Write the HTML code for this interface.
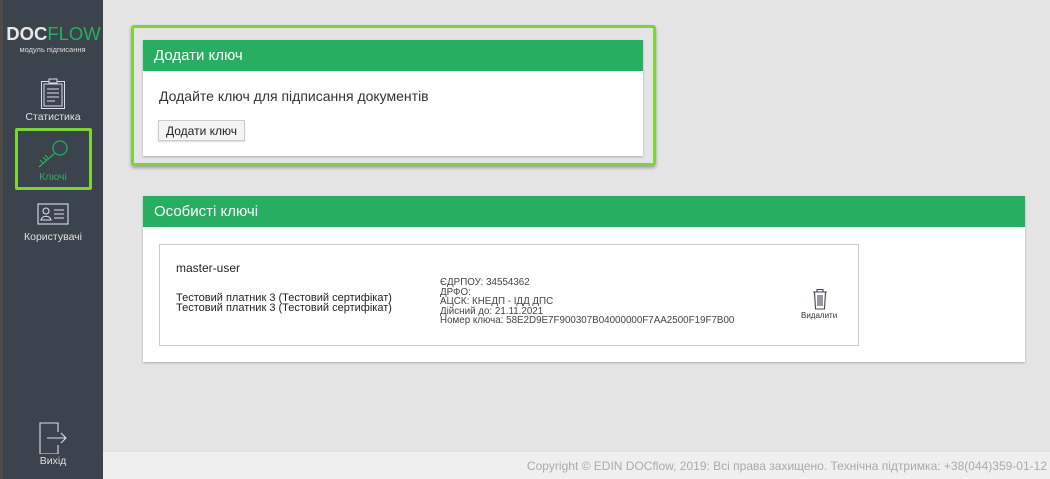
<!DOCTYPE html>
<html><head><meta charset="utf-8"><style>
*{margin:0;padding:0;box-sizing:border-box}
body{width:1050px;height:479px;overflow:hidden;background:#e4e4e4;font-family:"Liberation Sans",sans-serif;position:relative}
.sb{position:absolute;left:0;top:0;width:103px;height:479px;background:#3b434c;border-left:3px solid #4f4c47}
.logo{position:absolute;top:23px;left:2px;width:103px;text-align:center;font-size:18.5px;font-weight:bold;color:#e8e8e8}
.logo span{color:#27ae60;font-weight:normal}
.sub{position:absolute;top:45px;left:1px;width:103px;text-align:center;font-size:7.5px;color:#ddd}
.lbl{position:absolute;width:100px;left:3px;text-align:center;font-size:10.5px;color:#e0e0e0}
.abs{position:absolute}
.foot{position:absolute;left:103px;top:452px;width:947px;height:27px;background:#efefef;color:#aaa;font-size:12px;text-align:right;padding:7px 3px 0 0}
.card{position:absolute;background:#fff;box-shadow:0 1px 2px rgba(0,0,0,.25)}
.hd{background:#27ae60;color:#fff;font-size:15px;height:31px;padding:7px 11px}
</style></head><body>
<div class="sb"></div>
<div class="logo">DOC<span>FLOW</span></div>
<div class="sub">модуль підписання</div>
<svg class="abs" style="left:40px;top:78px" width="26" height="32" viewBox="0 0 26 32" fill="none" stroke="#dde" stroke-width="1"><rect x="1.5" y="3.5" width="23" height="27"/><rect x="4" y="6" width="18" height="22"/><rect x="9" y="1" width="8" height="4" fill="#3b434c"/><path d="M7 11h12M7 15h12M7 19h12M7 23h8"/></svg>
<div class="lbl" style="top:111px">Статистика</div>
<div class="abs" style="left:15px;top:128px;width:77px;height:62px;border:3px solid #7ed33a;border-radius:2px"></div>
<svg class="abs" style="left:34px;top:136px" width="40" height="34" viewBox="0 0 40 34" fill="none" stroke="#27ae60" stroke-width="1.2"><circle cx="26" cy="12" r="7"/><path d="M21 17L5 31M9 27l-3-3M12 24l-3-3M14 22l-3-3"/></svg>
<div class="lbl" style="top:171px;color:#27ae60">Ключі</div>
<svg class="abs" style="left:37px;top:203px" width="32" height="22" viewBox="0 0 32 22" fill="none" stroke="#dde" stroke-width="1.1"><rect x="1" y="1" width="30" height="20"/><circle cx="9" cy="8" r="3"/><path d="M4 17c1-5 9-5 10 0zM17 7h10M17 11h10M17 15h10"/></svg>
<div class="lbl" style="top:231px">Користувачі</div>
<svg class="abs" style="left:38px;top:422px" width="30" height="32" viewBox="0 0 30 32" fill="none" stroke="#dde" stroke-width="1.1"><path d="M20 10V1H2v31h18v-9"/><path d="M9 16h19M23 11l5 5-5 5"/></svg>
<div class="lbl" style="top:455px">Вихід</div>

<div class="abs" style="left:131px;top:25px;width:525px;height:141px;border:3px solid #7ed33a;border-radius:3px;box-shadow:0 2px 3px rgba(0,0,0,.3)"></div>
<div class="card" style="left:143px;top:40px;width:500px;height:116px">
<div class="hd">Додати ключ</div>
<div style="padding:17px 0 0 16px;font-size:14px;color:#333">Додайте ключ для підписання документів</div>
<div style="position:absolute;left:15px;top:80px;width:87px;height:21px;border:1px solid #ccc;background:#f4f4f4;font-size:12px;color:#222;text-align:center;padding-top:3px;box-shadow:0 1px 1px rgba(0,0,0,.15)">Додати ключ</div>
</div>
<div class="card" style="left:143px;top:196px;width:882px;height:166px">
<div class="hd">Особисті ключі</div>
<div style="position:absolute;left:16px;top:48px;width:700px;height:102px;border:1px solid #ccc">
<div style="position:absolute;left:16px;top:16px;font-size:12px;color:#222">master-user</div>
<div style="position:absolute;left:16px;top:48px;font-size:11px;line-height:10px;color:#222">Тестовий платник 3 (Тестовий сертифікат)<br>Тестовий платник 3 (Тестовий сертифікат)</div>
<div style="position:absolute;left:280px;top:33px;font-size:9.8px;line-height:9.6px;color:#444">ЄДРПОУ: 34554362<br>ДРФО:<br>АЦСК: КНЕДП - ІДД ДПС<br>Дійсний до: 21.11.2021<br>Номер ключа: 58E2D9E7F900307B04000000F7AA2500F19F7B00</div>
<svg style="position:absolute;left:652px;top:43px" width="16" height="22" viewBox="0 0 16 22" fill="none" stroke="#445" stroke-width="1.1"><path d="M1 4h14M5 4V1.5h6V4M2.5 4l1 17h9l1-17M6 7v11M8 7v11M10 7v11"/></svg>
<div style="position:absolute;left:641px;top:66px;font-size:8px;color:#333">Видалити</div>
</div>
</div>
<div class="foot">Copyright © EDIN DOCflow, 2019: Всі права захищено. Технічна підтримка: +38(044)359-01-12</div>
</body></html>
